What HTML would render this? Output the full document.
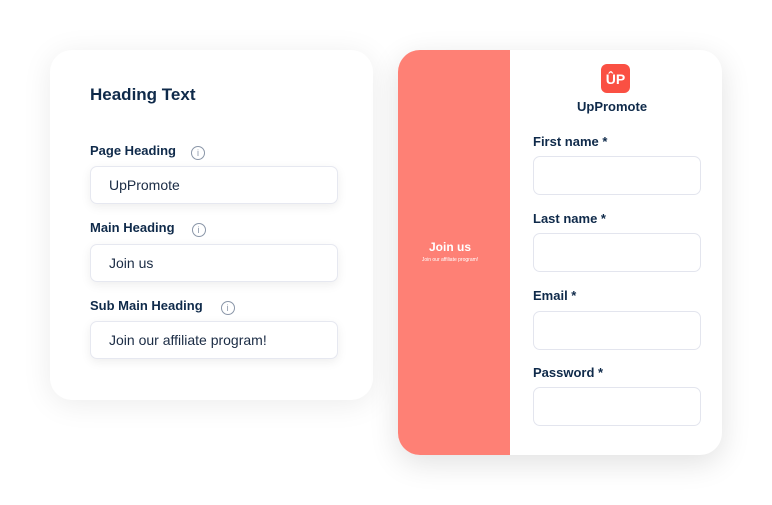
<!DOCTYPE html>
<html><head><style>
*{margin:0;padding:0;box-sizing:border-box}
body{width:772px;height:505px;background:#fff;font-family:"Liberation Sans",sans-serif;position:relative;overflow:hidden;color:#0f2a4a}
.card{position:absolute;background:#fff;border-radius:22px;box-shadow:0 4px 30px rgba(0,0,0,0.08)}
.lbl{position:absolute;font-weight:bold;font-size:13px;color:#0f2a4a}
.inp{position:absolute;background:#fff;border:1px solid #e6e8f0;border-radius:7px;box-shadow:0 3px 10px rgba(0,0,0,0.07);font-size:14px;color:#1a2b44;padding-left:18px;display:flex;align-items:center}
.info{display:inline-block;width:14px;height:14px;border:1px solid #8a96a8;border-radius:50%;font-size:9px;text-align:center;line-height:12px;color:#8a96a8;font-weight:normal;margin-left:15px;vertical-align:-1px}
.inp2{position:absolute;left:533px;width:168px;height:39px;border:1px solid #e3e5ee;border-radius:7px;background:#fff}
</style></head><body>
<div class="card" style="left:50px;top:50px;width:323px;height:350px"></div>
<div class="lbl" style="left:90px;top:85px;font-size:17px">Heading Text</div>
<div class="lbl" style="left:90px;top:143px">Page Heading<span class="info">i</span></div>
<div class="inp" style="left:90px;top:166px;width:248px;height:38px">UpPromote</div>
<div class="lbl" style="left:90px;top:220px">Main Heading<span class="info" style="margin-left:17px">i</span></div>
<div class="inp" style="left:90px;top:244px;width:248px;height:38px">Join us</div>
<div class="lbl" style="left:90px;top:298px">Sub Main Heading<span class="info" style="margin-left:18px">i</span></div>
<div class="inp" style="left:90px;top:321px;width:248px;height:38px">Join our affiliate program!</div>

<div class="card" style="left:398px;top:50px;width:324px;height:405px;overflow:hidden;box-shadow:0 8px 30px rgba(0,0,0,0.12)">
<div style="position:absolute;left:0;top:0;width:112px;height:405px;background:#fe8075"></div>
<div style="position:absolute;left:-8px;top:190px;width:120px;text-align:center;color:#fff;font-weight:bold;font-size:12px">Join us</div>
<div style="position:absolute;left:-8px;top:207px;width:120px;text-align:center;color:#fff;font-size:5px">Join our affiliate program!</div>
</div>
<div style="position:absolute;left:601px;top:64px;width:29px;height:29px;background:#fa5043;border-radius:6px;color:#fff;font-weight:bold;font-size:14px;text-align:center;line-height:31px">ÛP</div>
<div class="lbl" style="left:577px;top:99px;font-size:13px">UpPromote</div>
<div class="lbl" style="left:533px;top:134px">First name *</div>
<div class="inp2" style="top:156px"></div>
<div class="lbl" style="left:533px;top:211px">Last name *</div>
<div class="inp2" style="top:233px"></div>
<div class="lbl" style="left:533px;top:288px">Email *</div>
<div class="inp2" style="top:311px"></div>
<div class="lbl" style="left:533px;top:365px">Password *</div>
<div class="inp2" style="top:387px"></div>
</body></html>
